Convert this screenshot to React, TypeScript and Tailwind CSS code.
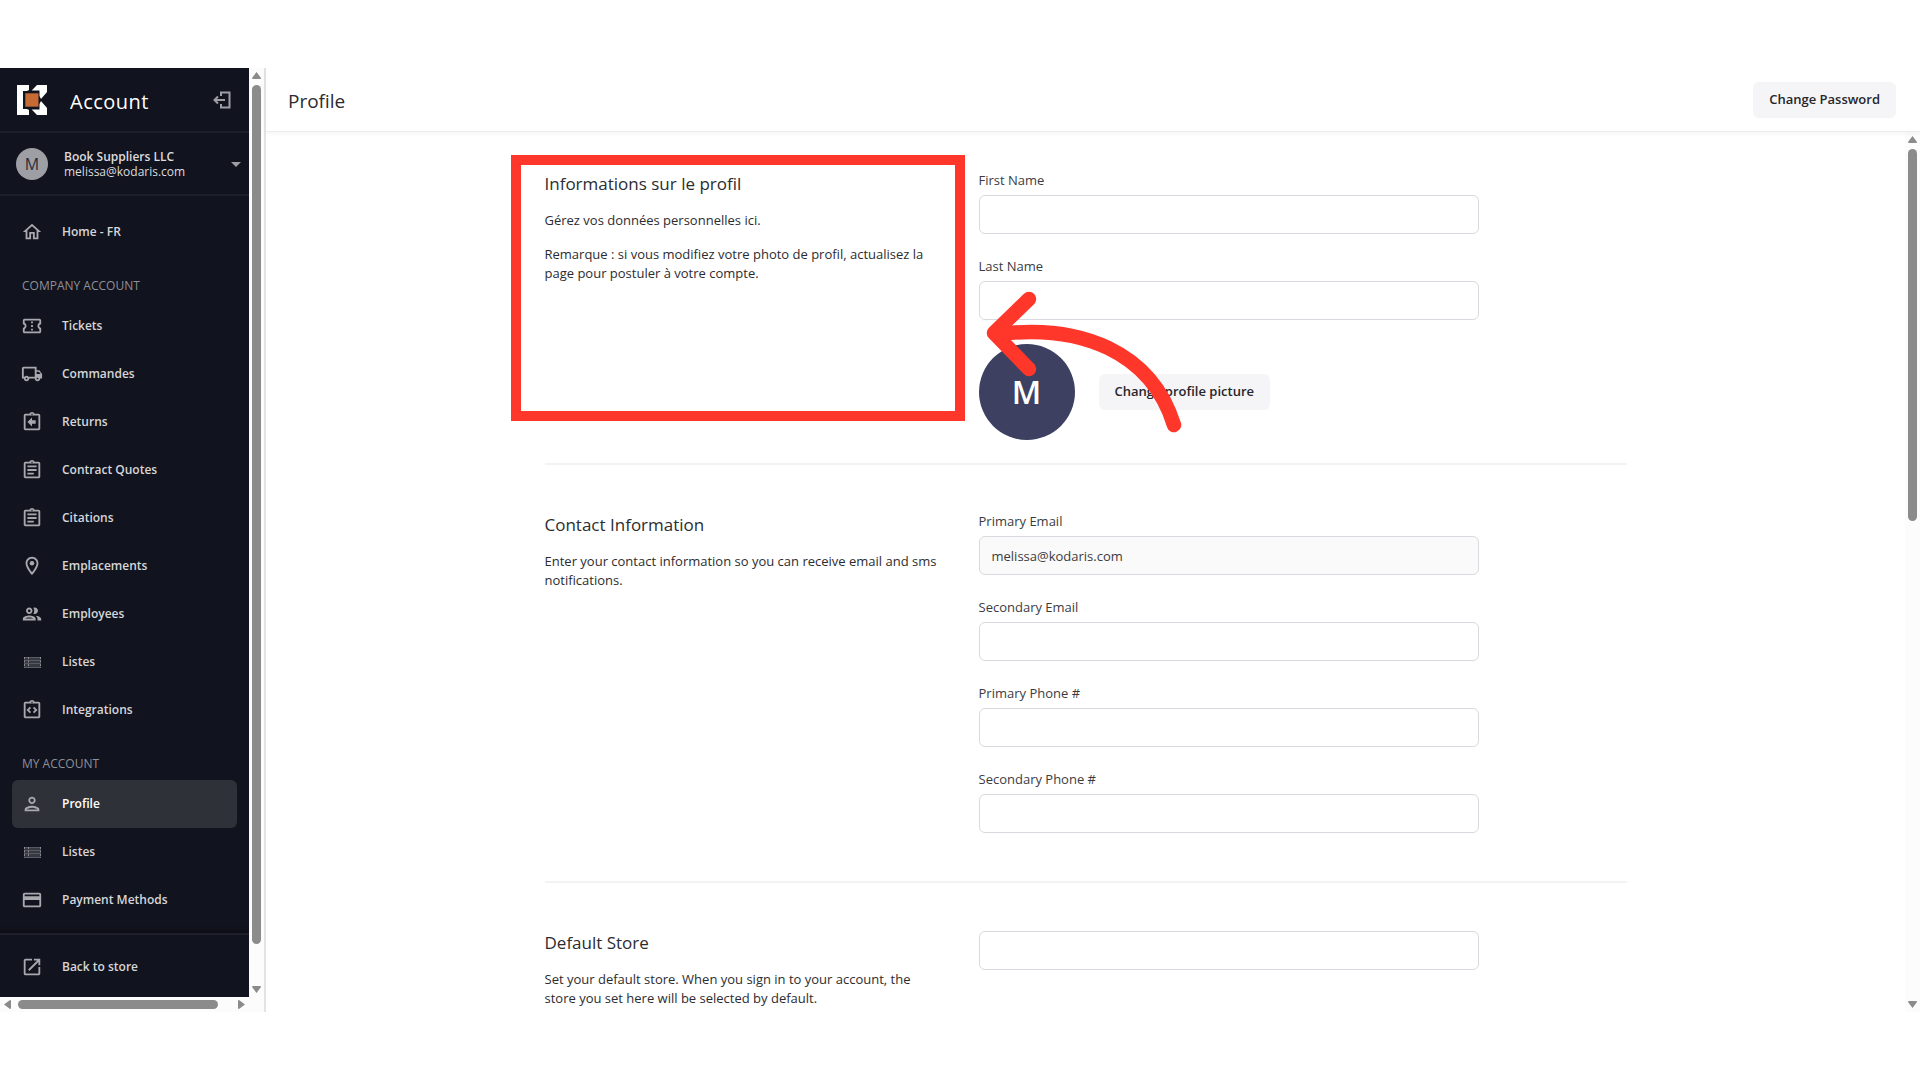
import React from "react";
import type { IconType } from "react-icons";
import {
  MdOutlineHome,
  MdOutlineConfirmationNumber,
  MdOutlineLocalShipping,
  MdOutlineAssignmentReturn,
  MdOutlineAssignment,
  MdOutlineLocationOn,
  MdOutlinePeople,
  MdOutlineIntegrationInstructions,
  MdOutlinePerson,
  MdOutlineCreditCard,
  MdOpenInNew,
  MdArrowDropDown,
} from "react-icons/md";

type NavIcon = IconType | React.FC<{ className?: string }>;

interface NavItem {
  label: string;
  icon: NavIcon;
  active?: boolean;
}

const ListIcon: React.FC<{ className?: string }> = ({ className }) => (
  <svg viewBox="0 0 22 22" className={className}>
    <path fill="currentColor" fillOpacity="0.25" d="M3 6h17v11H3z" />
    <g fill="none" stroke="currentColor" strokeWidth="1">
      <path d="M3 6.5h17M3 9.5h17M3 12.5h17M3 16.5h17" strokeOpacity="0.3" />
      <path d="M3.500 6v11M7.500 6v11M19.500 6v11" strokeDasharray="2 1.500" strokeOpacity="0.7" />
    </g>
  </svg>
);

const Logo = () => (
  <svg viewBox="0 0 30 30" className="size-[30px] shrink-0">
    <path fill="#fff" d="M0 0h12v5L10 6H6v18h4l2 1v5H0z" />
    <path fill="#fff" d="M14.700 5.500L20 0h10v7l-6 7-1.500-3V5.500z" />
    <path fill="#fff" d="M14.700 24.500L20 30h10v-7l-6-7-1.500 3v5.500z" />
    <path fill="#c66b34" d="M8.300 8.300h13.200v13.400H8.300z" />
  </svg>
);

const LogoutIcon = () => (
  <svg viewBox="0 0 18 18" className="size-[18px]" fill="none" stroke="currentColor" strokeWidth="2">
    <path d="M8 5V1.500h8.500v15H8V13" />
    <path d="M12 9H2M5 5.500L1.500 9 5 12.500" />
  </svg>
);

const companyItems: NavItem[] = [
  { label: "Tickets", icon: MdOutlineConfirmationNumber },
  { label: "Commandes", icon: MdOutlineLocalShipping },
  { label: "Returns", icon: MdOutlineAssignmentReturn },
  { label: "Contract Quotes", icon: MdOutlineAssignment },
  { label: "Citations", icon: MdOutlineAssignment },
  { label: "Emplacements", icon: MdOutlineLocationOn },
  { label: "Employees", icon: MdOutlinePeople },
  { label: "Listes", icon: ListIcon },
  { label: "Integrations", icon: MdOutlineIntegrationInstructions },
];

const accountItems: NavItem[] = [
  { label: "Profile", icon: MdOutlinePerson, active: true },
  { label: "Listes", icon: ListIcon },
  { label: "Payment Methods", icon: MdOutlineCreditCard },
];

const NavLink: React.FC<{ item: NavItem }> = ({ item }) => {
  const Icon = item.icon;
  return (
    <a
      href="#"
      aria-current={item.active ? "page" : undefined}
      className={`mx-3 flex h-12 items-center gap-[19px] rounded-md pl-[9px] text-xs font-semibold ${
        item.active ? "bg-[#2f3139] text-white" : "text-[#d6d6d9]"
      }`}
    >
      <Icon className="size-[22px] shrink-0 text-[#a8a8ae]" />
      {item.label}
    </a>
  );
};

const NavHeading: React.FC<{ children: React.ReactNode }> = ({ children }) => (
  <h2 className="mt-[18px] mb-1 pl-[22px] text-xs leading-6 text-[#8f9097]">{children}</h2>
);

const Arrow: React.FC<{ className?: string }> = ({ className }) => (
  <svg viewBox="0 0 9 7" className={`h-[7px] w-[9px] shrink-0 fill-[#8b8b8b] ${className ?? ""}`}>
    <path d="M4.500 0 L9 6 Q9 7 8 7 H1 Q0 7 0 6z" />
  </svg>
);

const VerticalScrollbar: React.FC<{ thumb: string }> = ({ thumb }) => (
  <div className="flex w-[15px] shrink-0 flex-col items-center gap-[6px] bg-[#fcfcfc] py-1">
    <Arrow />
    <div className="min-h-0 w-[9px] flex-1">
      <div className={`w-full rounded-full bg-[#8b8b8b] ${thumb}`} />
    </div>
    <Arrow className="rotate-180" />
  </div>
);

const Sidebar = () => (
  <aside className="flex shrink-0 flex-col border-r-2 border-[#e3e3e3] bg-[#fcfcfc]">
    <div className="flex min-h-0 flex-1">
      <div className="flex w-[249px] flex-col overflow-hidden bg-[#11131e]">
        <div className="flex h-[65px] shrink-0 items-center border-b-2 border-[#1d1f2a] pr-[18px] pl-[17px] text-white">
          <Logo />
          <span className="ml-[23px] flex-1 pt-1 text-xl tracking-wide">Account</span>
          <button type="button" aria-label="Log out" className="text-[#9e9ea5]">
            <LogoutIcon />
          </button>
        </div>
        <button
          type="button"
          className="flex h-[63px] shrink-0 items-center border-b-2 border-[#1d1f2a] pr-px pl-4 text-left text-[#dcdcde]"
        >
          <span className="flex size-8 items-center justify-center rounded-full bg-[#9e9ea5] text-base text-[#2b2d38]">
            M
          </span>
          <span className="ml-4 flex-1 text-xs leading-[15px]">
            <span className="block font-semibold">Book Suppliers LLC</span>
            <span className="block">melissa@kodaris.com</span>
          </span>
          <MdArrowDropDown className="size-6 text-[#9e9ea5]" />
        </button>
        <nav className="min-h-0 flex-1 overflow-hidden pt-3">
          <NavLink item={{ label: "Home - FR", icon: MdOutlineHome }} />
          <NavHeading>COMPANY ACCOUNT</NavHeading>
          {companyItems.map((item) => (
            <NavLink key={item.label} item={item} />
          ))}
          <NavHeading>MY ACCOUNT</NavHeading>
          {accountItems.map((item) => (
            <NavLink key={item.label} item={item} />
          ))}
        </nav>
        <div className="shrink-0 border-t-2 border-[#1d1f2a] pt-2 pb-[6px] shadow-[0_-2px_4px_rgba(0,0,0,0.4)]">
          <NavLink item={{ label: "Back to store", icon: MdOpenInNew }} />
        </div>
      </div>
      <VerticalScrollbar thumb="h-[96%]" />
    </div>
    <div className="mr-[15px] flex h-[15px] shrink-0 items-center gap-[6px] px-[3px]">
      <Arrow className="-rotate-90" />
      <div className="h-[9px] flex-1">
        <div className="h-full w-[94%] rounded-full bg-[#8b8b8b]" />
      </div>
      <Arrow className="rotate-90" />
    </div>
  </aside>
);

interface FieldProps {
  id: string;
  label?: string;
  value?: string;
}

const Field: React.FC<FieldProps> = ({ id, label, value }) => (
  <div className="mb-6">
    {label && (
      <label htmlFor={id} className="mb-[6px] block text-[13px] leading-[17px] text-[#3c3c3f]">
        {label}
      </label>
    )}
    <input
      id={id}
      type="text"
      defaultValue={value}
      readOnly={!!value}
      aria-label={label ? undefined : "Default Store"}
      className="block h-[39px] w-full rounded-md border border-[#d9d9df] bg-white px-3 text-[13px] text-[#3c3c3f] read-only:bg-[#fafafa]"
    />
  </div>
);

interface SectionProps {
  title: string;
  text: string[];
  children: React.ReactNode;
  className?: string;
}

const Section: React.FC<SectionProps> = ({ title, text, children, className }) => (
  <section className={`relative flex border-[#f3f3f4] ${className ?? ""}`}>
    <div className="w-[434px] shrink-0 pr-10 text-[#2c2c30]">
      <h2 className="text-[17px] leading-6">{title}</h2>
      {text.map((line) => (
        <p key={line} className="mt-[15px] text-[13px] leading-[19px]">
          {line}
        </p>
      ))}
    </div>
    <div className="w-full max-w-[500px]">{children}</div>
  </section>
);

const App: React.FC = () => {
  return (
    <div className="flex h-screen flex-col bg-white py-[68px] font-['Open_Sans','Noto_Sans',sans-serif]">
      <div className="flex min-h-0 flex-1">
        <Sidebar />
        <div className="flex min-w-0 flex-1 flex-col">
          <header className="z-10 flex h-16 shrink-0 items-center justify-between border-b border-[#ececec] pr-6 pl-[22px] shadow-[0_2px_4px_rgba(0,0,0,0.04)]">
            <h1 className="pt-1 text-[19px] text-[#2c2c30]">Profile</h1>
            <button
              type="button"
              className="h-9 rounded-md bg-[#f5f5f8] px-4 text-[13px] font-semibold text-[#26262a]"
            >
              Change Password
            </button>
          </header>

          <div className="flex min-h-0 flex-1">
            <main className="min-w-0 flex-1 overflow-hidden">
              <div className="mx-auto max-w-[1082px]">
                <Section
                  title="Informations sur le profil"
                  text={[
                    "Gérez vos données personnelles ici.",
                    "Remarque : si vous modifiez votre photo de profil, actualisez la page pour postuler à votre compte.",
                  ]}
                  className="border-b-2 pt-10 pb-[23px]"
                >
                  <Field id="firstName" label="First Name" />
                  <Field id="lastName" label="Last Name" />
                  <div className="flex items-center gap-6">
                    <div className="flex size-24 items-center justify-center rounded-full bg-[#3e4061] text-[32px] font-semibold text-white">
                      M
                    </div>
                    <button
                      type="button"
                      className="h-9 rounded-md bg-[#f5f5f8] px-4 text-[13px] font-semibold text-[#26262a]"
                    >
                      Change profile picture
                    </button>
                  </div>

                  {/* callout drawn over the section */}
                  <div className="pointer-events-none absolute top-[23px] -left-[34px] h-[266px] w-[454px] border-[10px] border-[#ff372a]" />
                  <svg
                    viewBox="0 0 200 150"
                    className="pointer-events-none absolute top-[158px] left-[440px] h-[150px] w-[200px]"
                    fill="none"
                    stroke="#ff372a"
                    strokeWidth="14.500"
                    strokeLinecap="round"
                    strokeLinejoin="round"
                  >
                    <path d="M44 9L9 43L44 79" />
                    <path d="M14 44C95 34 166 61 189 135" />
                  </svg>
                </Section>

                <Section
                  title="Contact Information"
                  text={["Enter your contact information so you can receive email and sms notifications."]}
                  className="border-b-2 pt-12 pb-6"
                >
                  <Field id="primaryEmail" label="Primary Email" value="melissa@kodaris.com" />
                  <Field id="secondaryEmail" label="Secondary Email" />
                  <Field id="primaryPhone" label="Primary Phone #" />
                  <Field id="secondaryPhone" label="Secondary Phone #" />
                </Section>

                <Section
                  title="Default Store"
                  text={[
                    "Set your default store. When you sign in to your account, the store you set here will be selected by default.",
                  ]}
                  className="pt-12 pb-6"
                >
                  <Field id="defaultStore" />
                </Section>
              </div>
            </main>
            <VerticalScrollbar thumb="h-[44%]" />
          </div>
        </div>
      </div>
    </div>
  );
};

export default App;
